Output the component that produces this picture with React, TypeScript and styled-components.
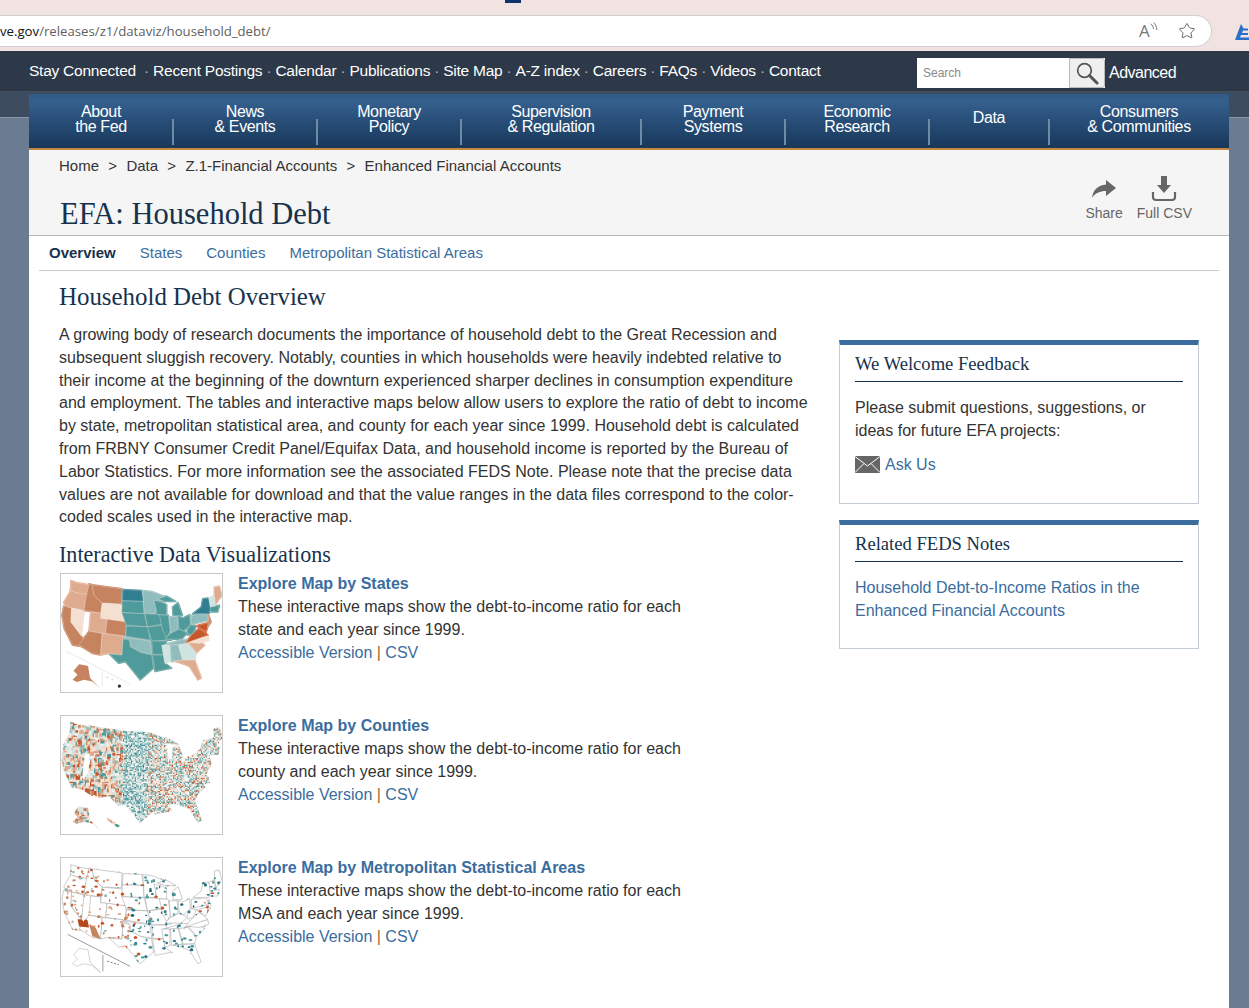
import styled, { createGlobalStyle } from "styled-components";
import { Star } from "lucide-react";

const GlobalStyle = createGlobalStyle`
  html, body {
    margin: 0;
    height: 100%;
    overflow: hidden;
    background: #6a7b92;
    font-family: "Liberation Sans", Arial, sans-serif;
  }
  * { box-sizing: border-box; }
  a { text-decoration: none; }
`;

const BrowserChrome = styled.div`
  position: relative;
  height: 51px;
  padding-top: 15px;
  background: #f1e3e2;
`;

const TabMarker = styled.span`
  position: absolute;
  top: 0;
  left: 505px;
  width: 16px;
  height: 3px;
  background: #12306a;
`;

const AddressBar = styled.div`
  display: flex;
  align-items: center;
  justify-content: space-between;
  width: 1212px;
  height: 32px;
  padding-right: 15px;
  background: #fff;
  border: 1px solid #d3cfcf;
  border-left: none;
  border-radius: 0 16px 16px 0;
  font: 13.2px "Open Sans", sans-serif;
  color: #5f5f5f;
  b { font-weight: 400; color: #111; }
`;

const BarIcons = styled.div`
  display: flex;
  align-items: center;
  gap: 21px;
  color: #666;
`;

const ReadAloud = styled.span`
  position: relative;
  width: 18px;
  height: 18px;
  font: 17px "Open Sans", sans-serif;
  line-height: 18px;
  color: #777;
  svg { position: absolute; top: 0; right: -1px; }
`;

const EdgeMark = styled.svg`
  position: absolute;
  top: 23px;
  left: 1232px;
`;

const TopBar = styled.div`
  display: flex;
  align-items: center;
  height: 41px;
  padding: 0 0 1px 29px;
  background: #2d3848;
  border-bottom: 1px solid #414e60;
`;

const TopLinks = styled.div`
  display: flex;
  width: 888px;
  margin-top: 1px;
  color: #aeb6c0;
  font-size: 15.5px;
  letter-spacing: -0.24px;
  white-space: pre;
  a { color: #fff; }
`;

const SearchBox = styled.div`
  display: flex;
  width: 188px;
  height: 30px;
  margin-top: 5px;
  background: #fff;
`;

const SearchInput = styled.span`
  flex: 1;
  padding: 8px 6px;
  color: #8a8a8a;
  font-size: 12px;
`;

const SearchButton = styled.span`
  display: flex;
  align-items: center;
  justify-content: center;
  width: 36px;
  background: #efefef;
  border: 1px solid #b9b9b9;
  border-radius: 0 3px 3px 0;
`;

const AdvancedLink = styled.a`
  margin: 5px 0 0 4px;
  color: #fff;
  font-size: 16px;
  letter-spacing: -0.5px;
`;

const PageBack = styled.div`
  height: 916px;
  padding: 2px 20px 0 29px;
  background: linear-gradient(#3e4c5f 0 25px, #8796a9 25px 26px, #6a7b92 26px);
`;

const Sheet = styled.div`
  height: 100%;
  background: #fff;
`;

const MainNav = styled.nav`
  display: flex;
  height: 56px;
  background: linear-gradient(#2f5a88 0, #35608e 12%, #17375a 100%);
  border-bottom: 2px solid #c8873a;
`;

const NavItem = styled.a<{ $width: number; $last?: boolean; $single?: boolean }>`
  position: relative;
  display: flex;
  align-items: center;
  justify-content: center;
  width: ${({ $width }) => $width}px;
  padding-bottom: ${({ $single }) => ($single ? 8 : 4)}px;
  color: #fff;
  font-size: 16px;
  line-height: 15px;
  letter-spacing: -0.38px;
  text-align: center;
  &:after {
    content: ${({ $last }) => ($last ? "none" : '""')};
    position: absolute;
    right: -1px;
    bottom: 3px;
    width: 2px;
    height: 26px;
    background: #6f8aa6;
  }
`;

const PageHeader = styled.header`
  display: flex;
  justify-content: space-between;
  height: 86px;
  padding: 7px 37px 0 30px;
  background: #f5f5f5;
  border-bottom: 1px solid #b5b5b5;
`;

const Breadcrumb = styled.div`
  display: flex;
  gap: 9.3px;
  color: #333;
  font-size: 15px;
  line-height: 18px;
  white-space: pre;
`;

const PageTitle = styled.h1`
  margin: 22px 0 0 1px;
  color: #17324d;
  font: 400 30.5px "Liberation Serif", serif;
`;

const HeaderActions = styled.div`
  display: flex;
  gap: 14px;
  padding-top: 19px;
`;

const ActionItem = styled.a`
  display: flex;
  flex-direction: column;
  align-items: center;
  gap: 3px;
  color: #666;
  font-size: 14px;
`;

const TabRow = styled.div`
  display: flex;
  gap: 24px;
  height: 35px;
  margin: 0 10px;
  padding: 8px 10px 0;
  border-bottom: 1px solid #ccc;
  font-size: 15px;
`;

const TabLink = styled.a<{ $active?: boolean }>`
  color: ${({ $active }) => ($active ? "#17324d" : "#3a6d9e")};
  font-weight: ${({ $active }) => ($active ? 700 : 400)};
`;

const Content = styled.div`
  display: flex;
  padding-left: 30px;
`;

const Article = styled.div`
  width: 752px;
`;

const SectionTitle = styled.h2`
  margin: 12px 0 0;
  color: #17324d;
  font: 400 24.9px/28px "Liberation Serif", serif;
`;

const Intro = styled.p`
  margin: 13px 0 0;
  color: #333;
  font-size: 16px;
  line-height: 22.8px;
`;

const SubTitle = styled.h3`
  margin: 13px 0 5px;
  color: #17324d;
  font: 400 22.1px/26px "Liberation Serif", serif;
`;

const MapRow = styled.div`
  display: flex;
  gap: 15px;
  height: 120px;
  margin: 0 0 22px 1px;
`;

const Thumb = styled.svg`
  flex: none;
  width: 163px;
  height: 120px;
  border: 1px solid #c8c8c8;
  background: #fff;
`;

const MapText = styled.div`
  width: 450px;
  margin-top: -1px;
  color: #333;
  font-size: 16px;
  line-height: 23px;
`;

const MapTitle = styled.a`
  display: block;
  color: #3a6d9e;
  font-weight: 700;
`;

const Link = styled.a`
  color: #3a6d9e;
`;

const Orange = styled.span`
  color: #a5622a;
`;

const Sidebar = styled.aside`
  width: 360px;
  margin-left: 28px;
  padding-top: 69px;
`;

const Card = styled.section<{ $height: number }>`
  height: ${({ $height }) => $height}px;
  margin-bottom: 16px;
  padding: 0 15px;
  border: 1px solid #c3ccd4;
  border-top: 5px solid #3a6d9e;
`;

const CardTitle = styled.h4`
  margin: 0 0 14px;
  padding: 7px 0 6px;
  height: 37px;
  color: #17324d;
  border-bottom: 1px solid #17324d;
  font: 400 18.6px/24px "Liberation Serif", serif;
`;

const CardText = styled.div`
  color: #333;
  font-size: 16px;
  line-height: 23px;
`;

const AskRow = styled.a`
  display: flex;
  align-items: center;
  gap: 5px;
  margin-top: 11px;
  color: #3a6d9e;
  font-size: 16px;
  line-height: 23px;
`;

type Shape = [string, string];

const o1 = "#c6835f";
const o2 = "#dfab8e";
const o3 = "#f5dfd0";
const t1 = "#2f7f90";
const t2 = "#4f9a9a";
const t3 = "#8fbcbc";
const t4 = "#cfe3e0";
const red = "#c8562b";

const states: Shape[] = [
  ["60,45 80,52 115,58 112,88 75,82 58,75 60,60", o2],
  ["38,112 60,75 75,82 112,88 105,100 100,135 50,125", o2],
  ["38,122 62,128 60,170 100,225 95,245 65,240 40,190 33,150", o1],
  ["62,128 100,137 92,210 60,170", o3],
  ["115,55 125,58 130,90 155,113 150,143 100,135 105,100", o1],
  ["125,58 215,70 213,115 155,113 130,90", o1],
  ["155,113 225,120 222,170 150,160", o3],
  ["120,140 150,143 150,160 170,162 165,205 115,198", o2],
  ["170,162 228,170 226,213 165,205", o1],
  ["115,198 155,205 150,270 125,265 85,240 95,225", o1],
  ["155,205 218,212 215,270 175,265 150,270", o2],
  ["218,72 275,75 280,108 216,106", t1],
  ["216,106 280,108 282,145 214,142", t2],
  ["214,142 282,145 292,185 228,180", t2],
  ["228,182 295,185 300,225 226,213", t2],
  ["218,215 300,228 305,268 270,262 240,245 238,225", t3],
  ["218,222 238,225 240,245 270,262 305,270 310,310 270,345 250,320 225,290 205,295 178,268 215,270", t2],
  ["278,75 305,78 348,95 320,115 315,145 282,143", t3],
  ["285,145 335,148 345,175 292,185", t2],
  ["292,185 340,180 365,225 305,228", t2],
  ["305,228 350,228 342,270 308,268", t2],
  ["308,270 342,270 345,295 365,310 315,320", t2],
  ["312,105 330,108 350,118 350,150 322,148", t2],
  ["322,100 350,92 378,108 345,108", t2],
  ["368,125 385,112 398,150 370,152", t2],
  ["328,148 355,150 362,195 350,218 338,195", t2],
  ["358,155 382,153 385,190 362,205", t3],
  ["385,153 400,158 420,148 422,178 400,198 388,190", t2],
  ["345,222 362,205 388,192 402,198 412,205 395,222", t2],
  ["340,240 395,224 425,222 400,240", t3],
  ["335,240 360,240 360,290 345,295 340,270", t4],
  ["362,240 385,238 398,285 365,290", t3],
  ["387,238 415,235 440,265 435,285 400,285", t4],
  ["370,288 435,285 455,340 445,345 420,305 395,295", o2],
  ["417,233 450,228 465,240 442,262", o2],
  ["402,238 428,222 475,212 478,225 450,235 415,232", o3],
  ["405,235 430,205 448,190 470,205 475,210", red],
  ["412,195 425,178 440,182 430,205 415,210", t2],
  ["425,150 470,145 478,165 425,178", t3],
  ["430,145 455,125 460,100 478,98 485,130 478,145", t1],
  ["440,182 478,172 470,200", red],
  ["478,150 485,170 475,185", o1],
  ["478,98 495,90 498,125 482,125", t4],
  ["482,125 510,120 505,140 482,140", t2],
  ["495,90 495,65 510,62 517,90 500,115", o2],
];

const alaska = "68,318 85,298 112,303 118,340 150,372 125,350 100,345 78,352 65,345 80,330";

function seeded(seed: number) {
  let value = seed;
  return () => {
    value = (value * 16807) % 2147483647;
    return value / 2147483647;
  };
}

function countyCells() {
  const rand = seeded(4711);
  const west = [o3, o3, o3, t4, "#e8f0ee", t4, o2, o2, t3, t2, o1, red];
  const plains = [t2, t3, t4, t1, "#fff", o3, t4, t2];
  const east = [t4, t3, "#fff", o3, o3, o2, t2, t2, red, "#eef4f3"];
  const cells = [];
  for (let x = 30; x < 520; x += 4) {
    for (let y = 40; y < 372; y += 4) {
      const set = x < 215 ? west : x < 290 ? plains : east;
      const size = x < 215 ? 8 + Math.floor(rand() * 7) : 4;
      if (x < 215 && rand() > 0.3) continue;
      cells.push(
        <rect key={`${x}-${y}`} x={x} y={y} width={size} height={size} fill={set[Math.floor(rand() * set.length)]} />,
      );
    }
  }
  return cells;
}

function metroSpots() {
  const rand = seeded(1999);
  const spots = [];
  for (let i = 0; i < 360; i++) {
    const x = 40 + rand() * 470;
    const y = 50 + rand() * 290;
    const eastern = x > 240;
    const tone = eastern
      ? rand() > 0.16 ? [t2, t1, "#1f6d78"][Math.floor(rand() * 3)] : red
      : rand() > 0.2 ? [o2, o1, red][Math.floor(rand() * 3)] : t3;
    spots.push(<ellipse key={i} cx={x} cy={y} rx={2 + rand() * 4} ry={2 + rand() * 3} fill={tone} />);
  }
  return spots;
}

function MapFrame({ children }: { children: React.ReactNode }) {
  return (
    <Thumb viewBox="30 25 488 357" preserveAspectRatio="none">
      {children}
    </Thumb>
  );
}

// white silhouette used to keep county cells and metro spots inside the country
function Silhouette({ id, withAlaska }: { id: string; withAlaska?: boolean }) {
  return (
    <mask id={id} maskUnits="userSpaceOnUse" x="30" y="25" width="488" height="357">
      {states.map(([points]) => (
        <polygon key={points} points={points} fill="#fff" stroke="#fff" strokeWidth="5" />
      ))}
      {withAlaska && <polygon points={alaska} fill="#fff" />}
      {withAlaska && <polygon points="170,333 210,358 200,362 168,338" fill="#fff" />}
    </mask>
  );
}

function StatesMap() {
  return (
    <MapFrame>
      <path d="M45 258 L240 358 M155 320 V365" stroke="#ddd" strokeWidth="2" fill="none" />
      {states.map(([points, fill]) => (
        <polygon key={points} points={points} fill={fill} stroke={fill} strokeWidth="5" strokeLinejoin="round" />
      ))}
      {states.map(([points, fill]) => (
        <polygon key={points} points={points} fill={fill} stroke="#f7e9df" strokeWidth="1" />
      ))}
      <polygon points={alaska} fill={o1} />
      <circle cx="207" cy="364" r="5" fill="#3a2a25" />
      <circle cx="185" cy="345" r="2" fill={o2} />
      <circle cx="170" cy="338" r="2" fill={o2} />
    </MapFrame>
  );
}

function CountiesMap() {
  return (
    <MapFrame>
      <Silhouette id="us-counties" withAlaska />
      <g mask="url(#us-counties)">
        <rect x="30" y="25" width="488" height="357" fill="#eef4f3" />
        {countyCells()}
      </g>
    </MapFrame>
  );
}

function MetroMap() {
  return (
    <MapFrame>
      <path d="M50 256 L240 353 M157 318 V368" stroke="#888" strokeWidth="2.5" fill="none" />
      <Silhouette id="us-metro" />
      {states.map(([points]) => (
        <polygon key={points} points={points} fill="#fff" stroke="#999" strokeWidth="1.5" />
      ))}
      <g mask="url(#us-metro)">
        {metroSpots()}
        <polygon points="80,210 110,212 115,235 85,232" fill="#b5481c" />
        <polygon points="115,225 135,235 150,270 125,262" fill={o1} />
      </g>
      <polygon points={alaska} fill="#fff" stroke="#aaa" strokeWidth="1.5" />
      <path d="M170 337 L205 348" stroke="#777" strokeWidth="3" strokeDasharray="6 5" />
    </MapFrame>
  );
}

const mapItems = [
  {
    title: "Explore Map by States",
    lines: "These interactive maps show the debt-to-income ratio for each state and each year since 1999.",
    map: <StatesMap />,
  },
  {
    title: "Explore Map by Counties",
    lines: "These interactive maps show the debt-to-income ratio for each county and each year since 1999.",
    map: <CountiesMap />,
  },
  {
    title: "Explore Map by Metropolitan Statistical Areas",
    lines: "These interactive maps show the debt-to-income ratio for each MSA and each year since 1999.",
    map: <MetroMap />,
  },
];

const navItems = [
  { label: ["About", "the Fed"], width: 144 },
  { label: ["News", "& Events"], width: 144 },
  { label: ["Monetary", "Policy"], width: 144 },
  { label: ["Supervision", "& Regulation"], width: 180 },
  { label: ["Payment", "Systems"], width: 144 },
  { label: ["Economic", "Research"], width: 144 },
  { label: ["Data"], width: 120 },
  { label: ["Consumers", "& Communities"], width: 180 },
];

const crumbs = ["Home", ">", "Data", ">", "Z.1-Financial Accounts", ">", "Enhanced Financial Accounts"];

export default function App() {
  return (
    <>
      <GlobalStyle />
      <BrowserChrome>
        <TabMarker />
        <AddressBar>
          <span>
            <b>ve.gov</b>/releases/z1/dataviz/household_debt/
          </span>
          <BarIcons>
            <ReadAloud>
              A
              <svg width="8" height="10" viewBox="0 0 8 10" fill="none" stroke="#777">
                <path d="M0.5 2 C2.5 3 3.5 5 3.5 7 M3.5 0.5 C5.5 2 6.8 5 6.8 8" />
              </svg>
            </ReadAloud>
            <Star size={18} strokeWidth={1.3} />
          </BarIcons>
        </AddressBar>
        <EdgeMark width="17" height="18" viewBox="0 0 17 18">
          <path d="M9 1 L3 17 H17 V14.5 H8 L9 12 H16 V10 H10 L11 7.5 H16 V5.5 H11.5 Z" fill="#2b6fc9" />
        </EdgeMark>
      </BrowserChrome>
      <TopBar>
        <TopLinks>
          <a>Stay Connected</a>{"  · "}<a>Recent Postings</a>{" · "}<a>Calendar</a>{" · "}
          <a>Publications</a>{" · "}<a>Site Map</a>{" · "}<a>A-Z index</a>{" · "}<a>Careers</a>{" · "}
          <a>FAQs</a>{" · "}<a>Videos</a>{" · "}<a>Contact</a>
        </TopLinks>
        <SearchBox>
          <SearchInput>Search</SearchInput>
          <SearchButton>
            <svg width="24" height="24" viewBox="0 0 24 24" fill="none" stroke="#555">
              <circle cx="9.5" cy="9.5" r="6.8" strokeWidth="1.7" />
              <path d="M14.5 14.5 L22 22" strokeWidth="3" strokeLinecap="round" />
            </svg>
          </SearchButton>
        </SearchBox>
        <AdvancedLink>Advanced</AdvancedLink>
      </TopBar>
      <PageBack>
        <Sheet>
          <MainNav>
            {navItems.map((item, index) => (
              <NavItem
                key={item.label[0]}
                $width={item.width}
                $last={index === navItems.length - 1}
                $single={item.label.length === 1}
              >
                <span>
                  {item.label.map((line) => (
                    <div key={line}>{line}</div>
                  ))}
                </span>
              </NavItem>
            ))}
          </MainNav>
          <PageHeader>
            <div>
              <Breadcrumb>
                {crumbs.map((crumb, index) => (
                  <span key={index}>{crumb}</span>
                ))}
              </Breadcrumb>
              <PageTitle>EFA: Household Debt</PageTitle>
            </div>
            <HeaderActions>
              <ActionItem>
                <svg width="26" height="26" viewBox="0 -3 26 26" fill="#666">
                  <path d="M15 1 L25 9 L15 17 V12 C9 12 4 14 1 19 C2 11 7 6 15 5.5 Z" />
                </svg>
                Share
              </ActionItem>
              <ActionItem>
                <svg width="26" height="26" viewBox="0 0 26 26" fill="#666">
                  <path d="M10 0 H16 V9 H20 L13 17 L6 9 H10 Z" />
                  <path d="M2 16 V21 Q2 24 5 24 H21 Q24 24 24 21 V16" fill="none" stroke="#666" strokeWidth="2.2" />
                </svg>
                Full CSV
              </ActionItem>
            </HeaderActions>
          </PageHeader>
          <TabRow>
            <TabLink $active>Overview</TabLink>
            <TabLink>States</TabLink>
            <TabLink>Counties</TabLink>
            <TabLink>Metropolitan Statistical Areas</TabLink>
          </TabRow>
          <Content>
            <Article>
              <SectionTitle>Household Debt Overview</SectionTitle>
              <Intro>
                A growing body of research documents the importance of household debt to the Great Recession and
                subsequent sluggish recovery. Notably, counties in which households were heavily indebted relative to
                their income at the beginning of the downturn experienced sharper declines in consumption expenditure
                and employment. The tables and interactive maps below allow users to explore the ratio of debt to income
                by state, metropolitan statistical area, and county for each year since 1999. Household debt is
                calculated from FRBNY Consumer Credit Panel/Equifax Data, and household income is reported by the Bureau
                of Labor Statistics. For more information see the associated FEDS Note. Please note that the precise data
                values are not available for download and that the value ranges in the data files correspond to the
                color-coded scales used in the interactive map.
              </Intro>
              <SubTitle>Interactive Data Visualizations</SubTitle>
              {mapItems.map((item) => (
                <MapRow key={item.title}>
                  {item.map}
                  <MapText>
                    <MapTitle>{item.title}</MapTitle>
                    {item.lines}
                    <div>
                      <Link>Accessible Version</Link> <Orange>|</Orange> <Link>CSV</Link>
                    </div>
                  </MapText>
                </MapRow>
              ))}
            </Article>
            <Sidebar>
              <Card $height={164}>
                <CardTitle>We Welcome Feedback</CardTitle>
                <CardText>Please submit questions, suggestions, or ideas for future EFA projects:</CardText>
                <AskRow>
                  <svg width="25" height="17" viewBox="0 0 25 17">
                    <rect width="25" height="17" fill="#666" />
                    <path d="M0 0.5 L12.5 10 L25 0.5 M0 16.5 L9 7.5 M25 16.5 L16 7.5" fill="none" stroke="#fff" strokeWidth="1" />
                  </svg>
                  Ask Us
                </AskRow>
              </Card>
              <Card $height={129}>
                <CardTitle>Related FEDS Notes</CardTitle>
                <CardText>
                  <Link>Household Debt-to-Income Ratios in the Enhanced Financial Accounts</Link>
                </CardText>
              </Card>
            </Sidebar>
          </Content>
        </Sheet>
      </PageBack>
    </>
  );
}
